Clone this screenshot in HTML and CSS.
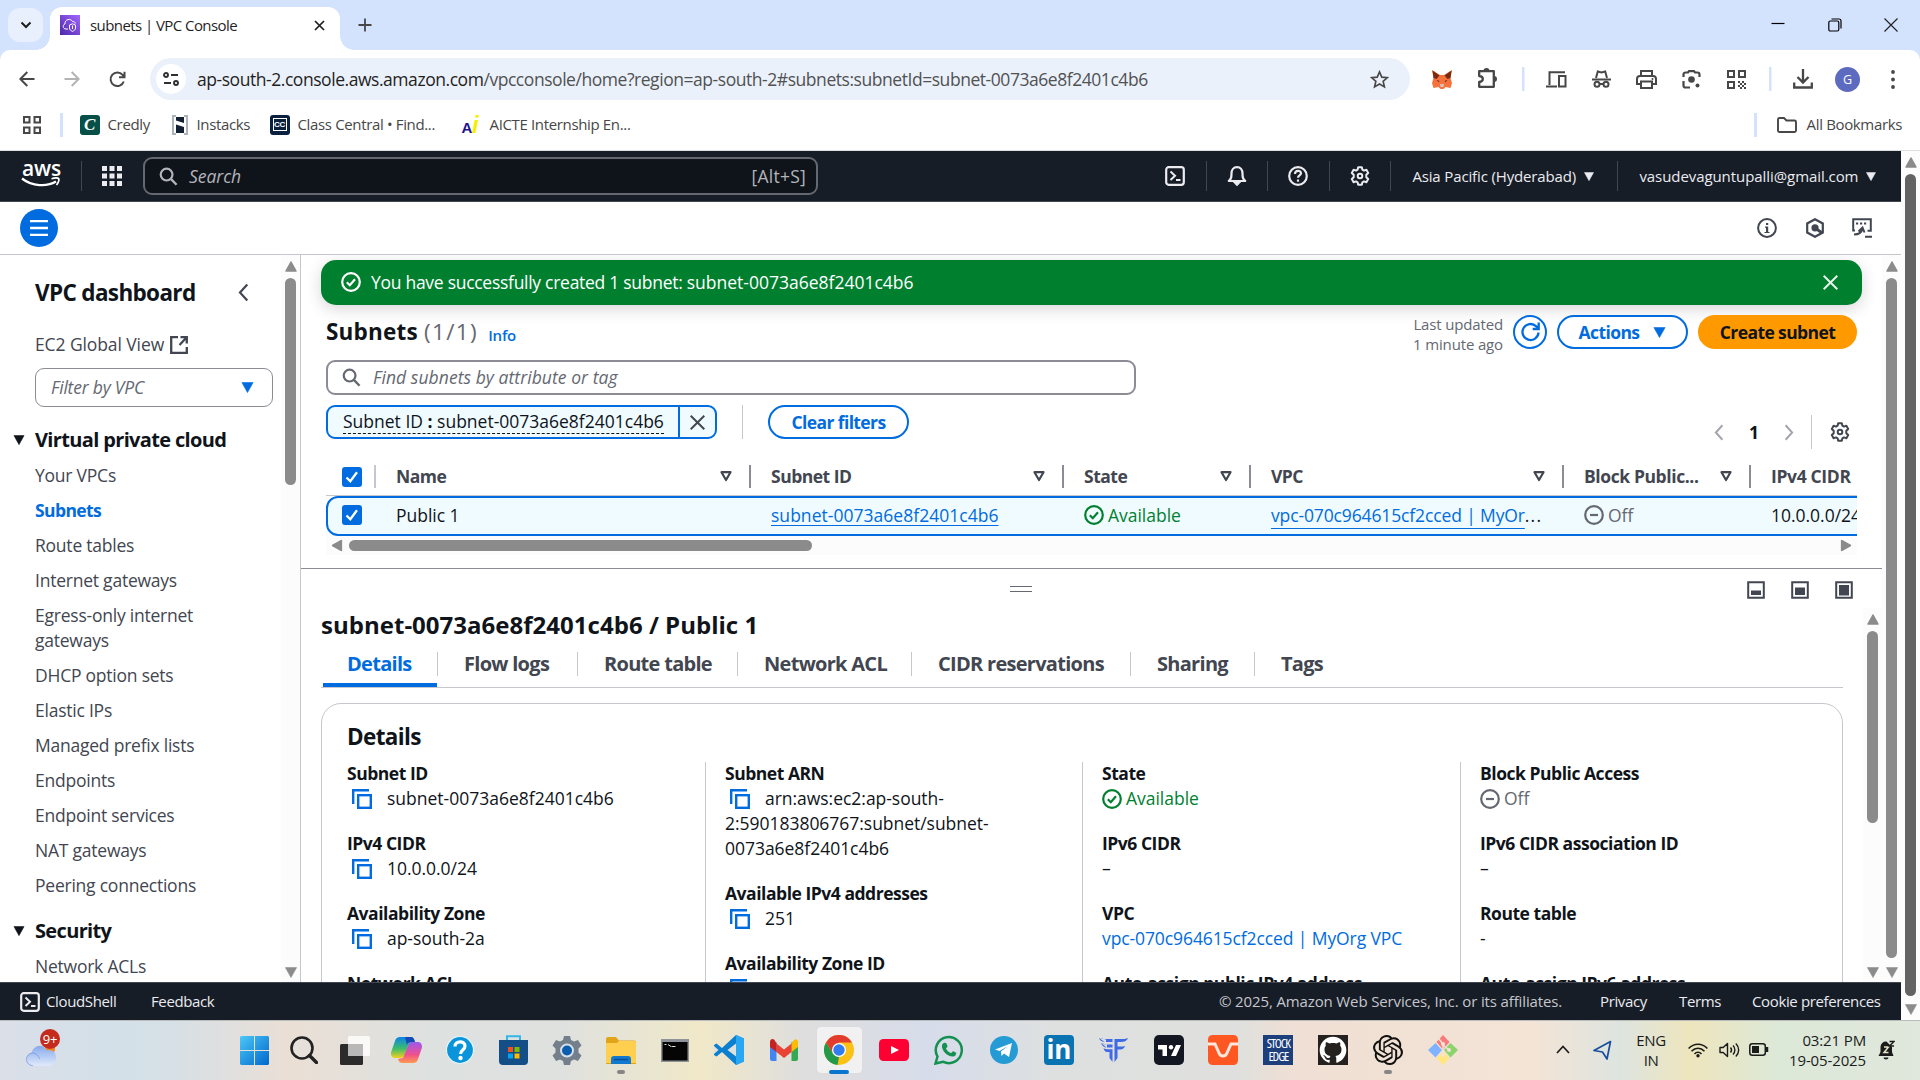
FILE: index.html
```html
<!DOCTYPE html>
<html lang="en">
<head>
<meta charset="utf-8">
<title>subnets | VPC Console</title>
<link rel="stylesheet" href="styles.css">
</head>
<body>
<svg class="defs" aria-hidden="true">
  <symbol id="i-gear" viewBox="0 0 20 20"><path d="M8.2 1.2h3.6l.6 2.5 1.5.9 2.5-.8 1.8 3.1-1.9 1.8v2.6l1.9 1.8-1.8 3.1-2.5-.8-1.5.9-.6 2.5H8.200l-.6-2.500-1.500-.9-2.500.8-1.800-3.100 1.900-1.800V8.700L1.800 6.900l1.800-3.100 2.500.8 1.500-.9z" fill="none" stroke="currentColor" stroke-width="2" stroke-linejoin="round"/><circle cx="10" cy="10" r="2.300" fill="none" stroke="currentColor" stroke-width="2"/></symbol>
  <symbol id="i-search" viewBox="0 0 20 20"><circle cx="8" cy="8" r="6.200" fill="none" stroke="currentColor" stroke-width="2.300"/><path d="M12.500 12.500 18.500 18.700" stroke="currentColor" stroke-width="2.500" fill="none"/></symbol>
  <symbol id="i-shell" viewBox="0 0 20 20"><rect x="1.200" y="1.200" width="17.600" height="17.600" rx="2.500" fill="none" stroke="currentColor" stroke-width="2.200"/><path d="M5.500 5.500 10 9.700l-4.500 4.200M11 14h4.500" fill="none" stroke="currentColor" stroke-width="2"/></symbol>
  <symbol id="i-copy" viewBox="0 0 20 20"><path d="M1.200 15V1.200H17" fill="none" stroke="currentColor" stroke-width="2.400"/><rect x="6.200" y="6.200" width="12.600" height="12.600" fill="none" stroke="currentColor" stroke-width="2.400"/></symbol>
  <symbol id="i-ok" viewBox="0 0 20 20"><circle cx="10" cy="10" r="8.800" fill="none" stroke="currentColor" stroke-width="2.200"/><path d="m5.800 10.200 3 3 5.200-6" fill="none" stroke="currentColor" stroke-width="2.200"/></symbol>
  <symbol id="i-off" viewBox="0 0 20 20"><circle cx="10" cy="10" r="8.800" fill="none" stroke="currentColor" stroke-width="2.200"/><path d="M6 10h8" stroke="currentColor" stroke-width="2.200"/></symbol>
  <symbol id="i-x" viewBox="0 0 20 20"><path d="m2 2 16 16M18 2 2 18" stroke="currentColor" stroke-width="2.300" fill="none"/></symbol>
  <symbol id="i-check" viewBox="0 0 20 20"><rect width="20" height="20" rx="3" fill="#006ce0"/><path d="m4.500 10.500 3.800 3.700L15 5.200" fill="none" stroke="#fff" stroke-width="2.300"/></symbol>
  <symbol id="i-sort" viewBox="0 0 12 11"><path d="M1.500 1.200h9L6 9z" fill="none" stroke="currentColor" stroke-width="2.200" stroke-linejoin="round"/></symbol>
  <symbol id="i-down" viewBox="0 0 12 11"><path d="M.4.600h11.200L6 10.600z" fill="currentColor" stroke="currentColor" stroke-width=".6" stroke-linejoin="round"/></symbol>
  <symbol id="i-up" viewBox="0 0 12 11"><path d="M1 10h10L6 1z" fill="currentColor" stroke="currentColor" stroke-width="1.500" stroke-linejoin="round"/></symbol>
  <symbol id="i-left" viewBox="0 0 11 20"><path d="M9.500 1.500 1.800 10l7.700 8.500" fill="none" stroke="currentColor" stroke-width="2.300"/></symbol>
</svg>

<header class="chrome">
  <div class="tabstrip">
    <button class="tab-search"><svg width="12" height="8" viewBox="0 0 12 8"><path d="m1.500 1.500 4.500 4.500 4.500-4.500" fill="none" stroke="#1f1f1f" stroke-width="2"/></svg></button>
    <div class="tab">
      <svg width="20" height="20" viewBox="0 0 20 20"><defs><linearGradient id="g-vpc" x1="0" y1="1" x2="1" y2="0"><stop offset="0" stop-color="#4d27aa"/><stop offset="1" stop-color="#a166ff"/></linearGradient></defs><rect width="20" height="20" fill="url(#g-vpc)"/><path d="M8 14H6C2.500 14 2.500 9.500 5 9c-.5-5 6-6 7.500-2.500 1.800-.3 2.700.8 2.700 2" fill="none" stroke="#fff" stroke-width="1"/><path d="M9.500 10 12.500 8.800l3 1.200v3.200c0 1.500-1.500 2.500-3 3.200-1.500-.7-3-1.700-3-3.200zM12.500 10.500v3.500" fill="none" stroke="#fff"/></svg>
      <span class="tab-title">subnets | VPC Console</span>
      <svg width="11" height="11" viewBox="0 0 11 11"><path d="m1 1 9 9M10 1l-9 9" stroke="#1f1f1f" stroke-width="1.700"/></svg>
    </div>
    <svg class="new-tab" width="14" height="14" viewBox="0 0 14 14"><path d="M7 .5v13M.5 7h13" stroke="#474747" stroke-width="1.800"/></svg>
    <div class="win-controls">
      <svg width="14" height="14" viewBox="0 0 14 14"><path d="M.5 5.500h13" stroke="#000" stroke-width="1.200"/></svg>
      <svg width="14" height="14" viewBox="0 0 14 14"><rect x=".8" y="3" width="10" height="10" rx="1.500" fill="none" stroke="#000" stroke-width="1.200"/><path d="M3.500 1h7.500a2 2 0 0 1 2 2v7.500" fill="none" stroke="#000" stroke-width="1.200"/></svg>
      <svg width="14" height="14" viewBox="0 0 14 14"><path d="m.5.500 13 13M13.500.500l-13 13" stroke="#222" stroke-width="1.200"/></svg>
    </div>
  </div>

  <div class="toolbar">
    <div class="nav-buttons">
      <svg width="16" height="16" viewBox="0 0 16 16"><path d="M15.500 8H1.500M8.300 1 1.300 8l7 7" fill="none" stroke="#474747" stroke-width="2"/></svg>
      <svg width="16" height="16" viewBox="0 0 16 16"><path d="M.5 8h14M7.700 1l7 7-7 7" fill="none" stroke="#b3b3b3" stroke-width="2"/></svg>
      <svg width="17" height="17" viewBox="0 0 17 17"><path d="M14.800 10.500a6.800 6.800 0 1 1-1.200-6.700L15.500 6M15.500.8V6.200H10" fill="none" stroke="#474747" stroke-width="2"/></svg>
    </div>
    <div class="omnibox">
      <span class="site-chip"><svg width="16" height="14" viewBox="0 0 16 14"><g fill="none" stroke="#303030" stroke-width="1.900"><circle cx="3" cy="3" r="2"/><path d="M8 3h7M1 11h7"/><circle cx="13" cy="11" r="2"/></g></svg></span>
      <span class="url">ap-south-2.console.aws.amazon.com<span>/vpcconsole/home?region=ap-south-2#subnets:subnetId=subnet-0073a6e8f2401c4b6</span></span>
      <svg width="19" height="19" viewBox="0 0 20 20"><path d="m10 2 2.400 5.500 6 .5-4.600 3.900 1.400 5.900L10 14.700l-5.200 3.100 1.400-5.900L1.600 8l6-.5z" fill="none" stroke="#474747" stroke-width="1.700"/></svg>
    </div>
    <div class="ext">
      <span class="cell"><svg width="20" height="19" viewBox="0 0 20 19"><path d="m0 0 8 5h4l8-5-1.500 8L20 13l-1.500 5-5-1-2 2h-3l-2-2-5 1L0 13l1.500-5z" fill="#f6713b"/><path d="m.5.500 7 5-3 3.500-3-1zM19.500.5l-7 5 3 3.500 3-1z" fill="#7a2a0f"/><path d="m8 14 4 0-.5 3h-3z" fill="#d8c4b8"/><path d="m4.500 10 3 1-1 1zM15.500 10l-3 1 1 1z" fill="#3b2418"/></svg></span>
      <span class="cell puzzle"><svg width="22" height="24" viewBox="0 0 22 24"><path d="M2.200 5.200h14.600v15.600H2.200V16c4.800-.5 4.800-5.500 0-6z" fill="none" stroke="#474747" stroke-width="2.300" stroke-linejoin="round"/><path d="M6.500 5a3 3 0 0 1 6 0zM17 10a3 3 0 0 1 0 6z" fill="#474747"/></svg></span>
      <span class="vbar"></span>
      <span class="cell"><svg width="21" height="17" viewBox="0 0 21 17"><path d="M3.500 14V1.200H19M0 15.500h11" fill="none" stroke="#474747" stroke-width="2"/><rect x="13" y="5" width="6.500" height="10.500" fill="none" stroke="#474747" stroke-width="2"/></svg></span>
      <span class="cell"><svg width="19" height="18" viewBox="0 0 19 18"><path d="M0 9.500h19" stroke="#474747" stroke-width="2"/><path d="m4 8 1.800-6.500 3.700 1 3.700-1L15 8" fill="none" stroke="#474747" stroke-width="2"/><g fill="none" stroke="#474747" stroke-width="2"><circle cx="5" cy="14.300" r="2.500"/><circle cx="14" cy="14.300" r="2.500"/><path d="M7.500 14h4"/></g></svg></span>
      <span class="cell"><svg width="21" height="19" viewBox="0 0 21 19"><g fill="none" stroke="#474747" stroke-width="2"><path d="M5 5V1h11v4M5 14H1V9a3 3 0 0 1 3-3h13a3 3 0 0 1 3 3v5h-4"/><path d="M5 11.500h11V18H5z"/></g><circle cx="16.500" cy="9" r="1" fill="#474747"/></svg></span>
      <span class="cell"><svg width="19" height="19" viewBox="0 0 19 19"><path d="M1.500 7V4.500a2 2 0 0 1 2-2H6l1-1.300h5l1 1.300h2.500a2 2 0 0 1 2 2V7M1.500 11v4.500a2 2 0 0 0 2 2H8" fill="none" stroke="#474747" stroke-width="2.200"/><circle cx="9.500" cy="9.500" r="3.300" fill="#474747"/><circle cx="15.500" cy="15.500" r="2" fill="#474747"/></svg></span>
      <span class="cell"><svg width="19" height="19" viewBox="0 0 19 19"><g fill="none" stroke="#474747" stroke-width="2"><rect x="1" y="1" width="6" height="6"/><rect x="12" y="1" width="6" height="6"/><rect x="1" y="12" width="6" height="6"/></g><path d="M11 11h2v2h-2zM15 11h2v2h-2zM13 13h2v2h-2zM17 13h2v2h-2zM11 15h2v2h-2zM15 15h2v2h-2zM13 17h2v2h-2zM17 17h2v2h-2z" fill="#474747"/></svg></span>
      <span class="vbar"></span>
      <span class="cell wide"><svg width="20" height="20" viewBox="0 0 20 20"><path d="M10 0v13M4.500 8 10 13.500 15.500 8M1.200 13.500v5h17.600v-5" fill="none" stroke="#474747" stroke-width="2.300"/></svg></span>
      <span class="cell"><b class="avatar">G</b></span>
      <span class="cell"><svg width="4" height="19" viewBox="0 0 4 19"><g fill="#474747"><circle cx="2" cy="2" r="1.900"/><circle cx="2" cy="9.500" r="1.900"/><circle cx="2" cy="17" r="1.900"/></g></svg></span>
    </div>
  </div>

  <div class="bookmarks">
    <svg class="apps" width="18" height="18" viewBox="0 0 18 18"><g fill="none" stroke="#474747" stroke-width="2"><path d="M1 1h5.500v5.500H1zM11.500 1H17v5.500h-5.500zM1 11.500h5.500V17H1zM11.500 11.500H17V17h-5.500z"/></g></svg>
    <span class="bm-bar"></span>
    <span class="bm credly"><span class="fav c1"><i>C</i></span>Credly</span>
    <span class="bm instacks"><svg width="16" height="20" viewBox="0 0 16 20"><path d="M4 1H1v18h3M12 1h3v18h-3" fill="none" stroke="#aeb3bb" stroke-width="2"/><path d="M4 2h8v6L4 5.500zM4 18h8v-6L4 9.500z" fill="#142033"/></svg>Instacks</span>
    <span class="bm central"><span class="fav c2"><b>CC</b></span>Class Central • Find...</span>
    <span class="bm aicte"><span class="ai"><b>A</b><i>i</i></span>AICTE Internship En...</span>
    <span class="all"><span class="bm-bar"></span><svg width="20" height="16" viewBox="0 0 20 16"><path d="M1 2.500A1.500 1.500 0 0 1 2.500 1H7l2.500 2.500h8A1.500 1.500 0 0 1 19 5v8.500a1.500 1.500 0 0 1-1.500 1.500h-15A1.500 1.500 0 0 1 1 13.500z" fill="none" stroke="#474747" stroke-width="1.900"/></svg>All Bookmarks</span>
  </div>
</header>

<div class="viewport">
  <div class="console">
    <nav class="aws-nav">
      <div class="aws-logo"><b>aws</b><svg width="39" height="11" viewBox="0 0 39 11"><path d="M1 1.500c10 8 25 8.500 34 3" fill="none" stroke="#fff" stroke-width="2.300"/><path d="M30.500 1.800c3-1 6-1.200 7-.3s0 4-2 6.500" fill="none" stroke="#fff" stroke-width="1.700"/></svg></div>
      <span class="nav-bar"></span>
      <svg class="waffle" width="20" height="20" viewBox="0 0 20 20"><path d="M0 0h5v5H0zM7.500 0h5v5h-5zM15 0h5v5h-5zM0 7.500h5v5H0zM7.500 7.500h5v5h-5zM15 7.500h5v5h-5zM0 15h5v5H0zM7.500 15h5v5h-5zM15 15h5v5h-5z" fill="#ebebf0"/></svg>
      <div class="aws-search"><svg width="19" height="19"><use href="#i-search"/></svg><i>Search</i><span>[Alt+S]</span></div>
      <div class="nav-cells">
        <span><svg width="20" height="20"><use href="#i-shell"/></svg></span>
        <span><svg width="20" height="20" viewBox="0 0 20 20"><path d="M1.800 15c2.700-2 2.700-4 2.700-7.500C4.500 4 6.500 1.200 10 1.200S15.500 4 15.500 7.500c0 3.500 0 5.500 2.700 7.500z" fill="none" stroke="currentColor" stroke-width="2.200" stroke-linejoin="round"/><path d="M6.500 16h7L10 19.800z" fill="currentColor" stroke="currentColor"/></svg></span>
        <span><svg width="20" height="20" viewBox="0 0 20 20"><circle cx="10" cy="10" r="8.800" fill="none" stroke="currentColor" stroke-width="2.200"/><path d="M7 8c0-4 6-4 6-.7 0 2-3 2.200-3 4.500" fill="none" stroke="currentColor" stroke-width="2.200"/><path d="M8.900 13.500h2.200v2.200H8.900z" fill="currentColor"/></svg></span>
        <span><svg width="20" height="20"><use href="#i-gear"/></svg></span>
      </div>
      <span class="region">Asia Pacific (Hyderabad)<svg width="10" height="9"><use href="#i-down"/></svg></span>
      <span class="account">vasudevaguntupalli@gmail.com<svg width="10" height="9"><use href="#i-down"/></svg></span>
    </nav>

    <div class="subbar">
      <button class="burger"><svg width="18" height="16" viewBox="0 0 18 16"><path d="M0 1.200h18M0 8h18M0 14.800h18" stroke="#fff" stroke-width="2.300"/></svg></button>
      <div class="tools">
        <svg width="20" height="20" viewBox="0 0 20 20"><circle cx="10" cy="10" r="8.900" fill="none" stroke="currentColor" stroke-width="2"/><path d="M9 5h2.200v2.100H9zM8 8.500h3.200v5.500h1.300v1H7.500v-1H9V9.700H8z" fill="currentColor"/></svg>
        <svg width="20" height="20" viewBox="0 0 20 20"><path d="m10 1.200 7.800 4.300v9L10 18.800l-7.800-4.300v-9z" fill="none" stroke="currentColor" stroke-width="2.200"/><circle cx="10" cy="9.800" r="3.600" fill="currentColor"/><path d="m10 10 6.500 4.500" stroke="currentColor" stroke-width="2.800"/></svg>
        <svg width="20" height="20" viewBox="0 0 20 20"><path d="M3 12.500H1.200V1.200h17.600v11.500H15.500M2 16.500c4.500 0 7.500-1 8.500-6M6.500 13.500l4-4 2 5M13 18.800h7" fill="none" stroke="currentColor" stroke-width="2"/><path d="M4 4.500h2.200v2H4zM8 4.500h2.200v2H8zM12 4.500h2.200v2H12z" fill="currentColor"/></svg>
      </div>
    </div>

    <div class="work">
      <aside class="sidebar">
        <div class="side-title"><h2>VPC dashboard</h2><svg width="11" height="19"><use href="#i-left"/></svg></div>
        <p class="ec2">EC2 Global View <svg width="18" height="18" viewBox="0 0 18 18"><path d="M8 1.200H1.200v15.600h15.600V11M10.500 1.200h6.300v6.300M16.500 1.500l-7 7.500" fill="none" stroke="currentColor" stroke-width="2.300"/></svg></p>
        <div class="vpc-filter"><i>Filter by VPC</i><svg width="13" height="11"><use href="#i-down"/></svg></div>
        <h3><svg width="12" height="10"><use href="#i-down"/></svg>Virtual private cloud</h3>
        <ul>
          <li>Your VPCs</li><li class="on">Subnets</li><li>Route tables</li><li>Internet gateways</li><li>Egress-only internet<br>gateways</li><li>DHCP option sets</li><li>Elastic IPs</li><li>Managed prefix lists</li><li>Endpoints</li><li>Endpoint services</li><li>NAT gateways</li><li>Peering connections</li>
        </ul>
        <h3><svg width="12" height="10"><use href="#i-down"/></svg>Security</h3>
        <ul><li>Network ACLs</li></ul>
      </aside>
      <div class="scroll side-scroll"><svg width="12" height="11"><use href="#i-up"/></svg><span class="thumb"></span><svg width="12" height="11"><use href="#i-down"/></svg></div>

      <main>
        <section class="list">
          <div class="flash"><svg width="20" height="20"><use href="#i-ok"/></svg><span>You have successfully created 1 subnet: <em>subnet-0073a6e8f2401c4b6</em></span><svg class="x" width="17" height="17"><use href="#i-x"/></svg></div>
          <div class="list-head">
            <h1>Subnets <span>(1/1)</span></h1><a>Info</a>
            <p>Last updated<br>1 minute ago</p>
            <button class="btn refresh"><svg width="21" height="20" viewBox="0 0 21 20"><path d="M18.500 10.500a8 8 0 1 1-2.500-6.300L18.700 6.500M18.700.5v6.500h-6" fill="none" stroke="currentColor" stroke-width="2.300"/></svg></button>
            <button class="btn actions">Actions<svg width="13" height="11"><use href="#i-down"/></svg></button>
            <button class="btn create">Create subnet</button>
          </div>
          <div class="find"><svg width="19" height="19"><use href="#i-search"/></svg><i>Find subnets by attribute or tag</i></div>
          <div class="filters">
            <div class="token"><span><u>Subnet ID <b>:</b> subnet-0073a6e8f2401c4b6</u></span><svg width="17" height="17"><use href="#i-x"/></svg></div>
            <span class="f-bar"></span>
            <button class="btn clear">Clear filters</button>
            <div class="pager"><svg width="10" height="17"><use href="#i-left"/></svg><b>1</b><svg class="flip" width="10" height="17"><use href="#i-left"/></svg><span></span><svg class="gear" width="20" height="20"><use href="#i-gear"/></svg></div>
          </div>
          <div class="table">
            <div class="tr th">
              <span class="sel"><svg width="20" height="20"><use href="#i-check"/></svg></span>
              <span>Name<svg width="12" height="11"><use href="#i-sort"/></svg></span>
              <span>Subnet ID<svg width="12" height="11"><use href="#i-sort"/></svg></span>
              <span>State<svg width="12" height="11"><use href="#i-sort"/></svg></span>
              <span>VPC<svg width="12" height="11"><use href="#i-sort"/></svg></span>
              <span class="blk">Block Public...<svg width="12" height="11"><use href="#i-sort"/></svg></span>
              <span class="last">IPv4 CIDR</span>
            </div>
            <div class="tr td">
              <span class="sel"><svg width="20" height="20"><use href="#i-check"/></svg></span>
              <span>Public 1</span>
              <span><a>subnet-0073a6e8f2401c4b6</a></span>
              <span class="ok"><svg width="20" height="20"><use href="#i-ok"/></svg>Available</span>
              <span class="cut"><a class="low">vpc-070c964615cf2cced | MyOr</a>...</span>
              <span class="off"><svg width="20" height="20"><use href="#i-off"/></svg>Off</span>
              <span>10.0.0.0/24</span>
            </div>
          </div>
          <div class="hscroll"><svg class="l" width="12" height="11"><use href="#i-up"/></svg><span></span><svg class="r" width="12" height="11"><use href="#i-up"/></svg></div>
        </section>

        <section class="split">
          <div class="split-bar">
            <div class="handle"><span></span></div>
            <svg width="18" height="18" viewBox="0 0 18 18"><path d="M1.200 1.200h15.600v15.600H1.200z" fill="none" stroke="currentColor" stroke-width="2"/><path d="M4 9.500h10V14H4z" fill="currentColor"/></svg>
            <svg width="18" height="18" viewBox="0 0 18 18"><path d="M1.200 1.200h15.600v15.600H1.200z" fill="none" stroke="currentColor" stroke-width="2"/><path d="M4 6.500h10V14H4z" fill="currentColor"/></svg>
            <svg width="18" height="18" viewBox="0 0 18 18"><path d="M1.200 1.200h15.600v15.600H1.200z" fill="none" stroke="currentColor" stroke-width="2"/><path d="M4 4h10v10.500H4z" fill="currentColor"/></svg>
          </div>
          <div class="split-body">
            <div class="split-content">
              <h2>subnet-0073a6e8f2401c4b6 / Public 1</h2>
              <div class="tabs"><span class="on t1">Details</span><span class="t2">Flow logs</span><span class="t3">Route table</span><span class="t4">Network ACL</span><span class="t5">CIDR reservations</span><span class="t6">Sharing</span><span class="t7">Tags</span></div>
              <div class="card">
                <h2>Details</h2>
                <div class="cols">
                  <div>
                    <dl><dt>Subnet ID</dt><dd><svg class="cp" width="20" height="20"><use href="#i-copy"/></svg><em>subnet-0073a6e8f2401c4b6</em></dd></dl>
                    <dl><dt>IPv4 CIDR</dt><dd><svg class="cp" width="20" height="20"><use href="#i-copy"/></svg>10.0.0.0/24</dd></dl>
                    <dl><dt>Availability Zone</dt><dd><svg class="cp" width="20" height="20"><use href="#i-copy"/></svg>ap-south-2a</dd></dl>
                    <dl><dt>Network ACL</dt></dl>
                  </div>
                  <div>
                    <dl><dt>Subnet ARN</dt><dd><svg class="cp" width="20" height="20"><use href="#i-copy"/></svg>arn:aws:ec2:ap-south-<br>2:590183806767:subnet/subnet-<br>0073a6e8f2401c4b6</dd></dl>
                    <dl><dt>Available IPv4 addresses</dt><dd><svg class="cp" width="20" height="20"><use href="#i-copy"/></svg>251</dd></dl>
                    <dl><dt>Availability Zone ID</dt><dd><svg class="cp" width="20" height="20"><use href="#i-copy"/></svg></dd></dl>
                  </div>
                  <div>
                    <dl><dt>State</dt><dd class="ok"><svg width="20" height="20"><use href="#i-ok"/></svg>Available</dd></dl>
                    <dl><dt>IPv6 CIDR</dt><dd>–</dd></dl>
                    <dl><dt>VPC</dt><dd><a>vpc-070c964615cf2cced | MyOrg VPC</a></dd></dl>
                    <dl><dt>Auto-assign public IPv4 address</dt></dl>
                  </div>
                  <div>
                    <dl><dt>Block Public Access</dt><dd class="off"><svg width="20" height="20"><use href="#i-off"/></svg>Off</dd></dl>
                    <dl><dt>IPv6 CIDR association ID</dt><dd>–</dd></dl>
                    <dl><dt>Route table</dt><dd>-</dd></dl>
                    <dl><dt>Auto-assign IPv6 address</dt></dl>
                  </div>
                </div>
              </div>
            </div>
            <div class="scroll split-scroll"><svg width="12" height="11"><use href="#i-up"/></svg><span class="thumb"></span><svg width="12" height="11"><use href="#i-down"/></svg></div>
          </div>
        </section>
      </main>
      <div class="scroll main-scroll"><svg width="12" height="11"><use href="#i-up"/></svg><span class="thumb"></span><svg width="12" height="11"><use href="#i-down"/></svg></div>
    </div>

    <footer>
      <svg width="20" height="20"><use href="#i-shell"/></svg><span class="f1">CloudShell</span><span class="f2">Feedback</span>
      <span class="copy">© 2025, Amazon Web Services, Inc. or its affiliates.</span><span class="f3">Privacy</span><span class="f4">Terms</span><span class="f5">Cookie preferences</span>
    </footer>
  </div>
  <div class="scroll page-scroll"><svg width="12" height="11"><use href="#i-up"/></svg><span class="thumb"></span><svg width="12" height="11"><use href="#i-down"/></svg></div>
</div>

<div class="taskbar">
  <div class="weather"><svg width="31" height="25" viewBox="0 0 32 25"><defs><linearGradient id="g-cl" x1="0" y1="0" x2="0" y2="1"><stop offset="0" stop-color="#86a9ec"/><stop offset="1" stop-color="#dfe9fb"/></linearGradient></defs><circle cx="25" cy="7" r="5" fill="#f08a24"/><path d="M7 24a7 7 0 0 1-1-13.500C7 4 17 0 21 8c8-1 10 4 10 8s-3 8-7 8z" fill="url(#g-cl)"/><path d="M7 24a6 6 0 0 1 0-13c4 0 6 3 7 6" fill="none" stroke="#6f97de" stroke-width=".8"/></svg><span class="badge">9+</span></div>
  <div class="apps-row">
    <span class="w50"><svg width="29" height="29" viewBox="0 0 29 29"><defs><linearGradient id="g-win" x1="0" y1="0" x2="1" y2="1"><stop offset="0" stop-color="#4cc8f8"/><stop offset="1" stop-color="#0067cc"/></linearGradient></defs><path d="M1 0h13v14H0V1zM15 0h13l1 1v13H15zM0 15h14v14H1l-1-1zM15 15h14v13l-1 1H15z" fill="url(#g-win)"/></svg></span>
    <span class="w50"><svg width="28" height="28" viewBox="0 0 28 28"><circle cx="12" cy="12" r="10.500" fill="#e6e2dd" fill-opacity=".5" stroke="#222" stroke-width="2.600"/><path d="m19.500 19.500 7 7" stroke="#222" stroke-width="3.400" stroke-linecap="round"/></svg></span>
    <span class="w51"><svg width="30" height="29" viewBox="0 0 30 29"><rect x="0" y="8" width="23" height="21" rx="1.500" fill="#2b2b2b"/><rect x="8" y="0" width="22" height="20" rx="1.500" fill="#fff" fill-opacity=".8"/><rect x="8" y="8" width="15" height="12" fill="#b8b8b8"/></svg></span>
    <span class="w53"><svg width="31" height="28" viewBox="0 0 31 28"><defs><linearGradient id="g-c1" x1="0" y1="0" x2="0" y2="1"><stop offset="0" stop-color="#0a84e8"/><stop offset=".55" stop-color="#3bbd6c"/><stop offset="1" stop-color="#f5cf1c"/></linearGradient><linearGradient id="g-c2" x1="0" y1="0" x2="0" y2="1"><stop offset="0" stop-color="#9b59f0"/><stop offset=".6" stop-color="#f0508c"/><stop offset="1" stop-color="#ff9a4d"/></linearGradient></defs><path d="M14 1h6c2 0 3 1.500 4 5l-6 2-4 10c-1 3-2 4-5 4H4c-3 0-5-3-3.500-7L4 5c1-3 2.500-4 5-4z" fill="url(#g-c1)"/><path d="M17 27h-6c-2 0-3-1.500-4-4l5-1 5-12c1-3 2-4 5-4h5c3 0 5 3 3.500 7L27 23c-1 3-2.500 4-5 4z" fill="url(#g-c2)"/><path d="M14 1h6c2 0 3 1.500 4 5h-3c-3 0-4 0-5 3z" fill="#1648b8"/></svg></span>
    <span class="w53"><svg width="28" height="30" viewBox="0 0 28 30"><circle cx="14" cy="15" r="13.500" fill="#0a95db" stroke="#e8f6fd" stroke-width="1.200"/><path d="M9 11.500c0-6 10-6 10-.5 0 4-4.500 4-4.500 8" fill="none" stroke="#fff" stroke-width="3.200"/><circle cx="14.500" cy="23" r="2.200" fill="#fff"/></svg></span>
    <span><svg width="29" height="30" viewBox="0 0 29 30"><path d="M8 7V1.200h13V7" fill="none" stroke="#35b6e8" stroke-width="2"/><path d="M0 5h29v21a4 4 0 0 1-4 4H4a4 4 0 0 1-4-4z" fill="#134e86"/><path d="M9 12h5v5H9z" fill="#f25022"/><path d="M15.500 12h5v5h-5z" fill="#7fba00"/><path d="M9 18.500h5v5H9z" fill="#00a4ef"/><path d="M15.500 18.500h5v5h-5z" fill="#ffb900"/></svg></span>
    <span><svg width="30" height="29" viewBox="0 0 30 29"><path d="M12 0h6l1 4 3 1.500 4-1.500 3.500 5.500-3 3v4l3 3-3.500 5.500-4-1.500-3 1.500-1 4h-6l-1-4-3-1.500L4 25 .5 19.500l3-3v-4l-3-3L4 4l4 1.500L11 4z" fill="#73808c"/><circle cx="15" cy="14.500" r="6" fill="#0d5dae" stroke="#d5e0ea" stroke-width="2"/></svg></span>
    <span class="run"><svg width="30" height="27" viewBox="0 0 30 27"><path d="M0 2a2 2 0 0 1 2-2h8l3 3.500H28a2 2 0 0 1 2 2V27H0z" fill="#e2a51a"/><path d="M0 6h11l2-2h15a2 2 0 0 1 2 2v20H0z" fill="#ffd04f"/><path d="M5 27v-5a3 3 0 0 1 3-3h14a3 3 0 0 1 3 3v5z" fill="#1279cf"/><path d="M8 22.500h14" stroke="#0a4f96" stroke-width="1.500"/></svg></span>
    <span><svg width="28" height="23" viewBox="0 0 28 23"><rect width="28" height="23" fill="#8e9399"/><rect x="1.500" y="3" width="25" height="18.500" fill="#050505"/><path d="M3.500 5.500h2M7 5.500l3 2M10.500 7.500h4" stroke="#ddd"/></svg></span>
    <span class="w55"><svg width="30" height="30" viewBox="0 0 30 30"><path d="m22 0 8 3.500v23L22 30 8 17l-5.500 4.500L0 20V10l2.500-1.500L8 13z" fill="#0b7fd0"/><path d="m22 0 8 3.500v23L22 30z" fill="#2aa7f2"/><path d="M22 8.500v13L13.500 15z" fill="#dfe1dc"/><path d="M0 11v8l4.500-4z" fill="#dfe1dc"/></svg></span>
    <span class="w55"><svg width="28" height="22" viewBox="0 0 28 22"><path d="M0 3h6.500v19H2a2 2 0 0 1-2-2z" fill="#4285f4"/><path d="M21.500 3H28v17a2 2 0 0 1-2 2h-4.500z" fill="#34a853"/><path d="M21.500 4.500 24 1c2-2 4 0 4 2v5l-6.500 5z" fill="#fbbc04"/><path d="M6.500 4.500 14 10.500l7.500-6V13L14 19 6.500 13z" fill="#ea4335"/><path d="M0 3c0-2.500 2.500-4 4.500-2l2 3.500V13L0 8z" fill="#c5221f"/></svg></span>
    <span class="w55 active"><svg width="30" height="30" viewBox="0 0 30 30"><circle cx="15" cy="15" r="15" fill="#fbc116"/><path d="M2 7.500A15 15 0 0 1 28 7.500H15L9 18.500z" fill="#e33b2e"/><path d="M2 7.500 9 18.500 15 22l-1.500 8A15 15 0 0 1 2 7.500z" fill="#229a4a"/><circle cx="15" cy="15" r="7" fill="#fff"/><circle cx="15" cy="15" r="5.700" fill="#2f7df0"/></svg></span>
    <span class="w55"><svg width="30" height="22" viewBox="0 0 30 22"><rect width="30" height="22" rx="4.500" fill="#ff0033"/><path d="m12 7 8 4-8 4z" fill="#fff"/></svg></span>
    <span class="w55"><svg width="30" height="30" viewBox="0 0 30 30"><path d="m1.500 28.500 2-7A13 13 0 1 1 9 26.700z" fill="none" stroke="#149150" stroke-width="2.500"/><path d="M10 8c2-1 2.500 0 3.500 3 .3 1-1.500 2-1.500 2.500 1 2 2.500 3.500 5 4.500.8 0 1.500-2 2.200-1.800 3.500 1.500 3.500 1.800 2.500 3.800C18 25 7 17 8 10.500 8.300 9 9 8.400 10 8z" fill="#149150"/></svg></span>
    <span class="w55"><svg width="28" height="28" viewBox="0 0 28 28"><circle cx="14" cy="14" r="14" fill="#249bd4"/><path d="M5 13.500 22 7l-3 14-5-3.500-2.500 2.500-.5-4.500 7-5.500-8.500 5z" fill="#fff"/></svg></span>
    <span class="w55"><b class="sq in">in</b></span>
    <span class="w55"><svg width="29" height="24" viewBox="0 0 29 24"><path d="M0 0c3 1.500 8 1 13.500 1v3H7C6 4 5.500 4 5 3.500M2 5c3 2 6 1.500 11.500 1.500v3H7.500M4.500 10c2 1.500 5 1.200 9 1.200V24l-3-4v-6H8c-2 0-3-2-3.500-4zM2 5c.7 2.500 3 4.500 6 4.500V6.800zM0 0c.7 2.500 3 4 7 4V1.500z" fill="#4169e8"/><path d="M29 0c-3 1.500-8 1-13.500 1v23l3-4V11.500h3c2 0 4-1.500 4.500-3.500-2 .7-4 .5-7.500.5V4H22c4 0 6-1.500 7-4z" fill="#3c6be4"/></svg></span>
    <span class="w55"><svg width="30" height="30" viewBox="0 0 30 30"><rect width="30" height="30" rx="5" fill="#131722"/><path d="M4 10h9v11H8.500v-6.500H4zM22 10h5l-5 11h-5z" fill="#fff"/><circle cx="17" cy="12.200" r="2.200" fill="#fff"/></svg></span>
    <span class="w55"><svg width="30" height="30" viewBox="0 0 30 30"><rect width="30" height="30" rx="4.500" fill="#ff5722"/><path d="M0 9h7l4 9c1.500 4 6.500 4 8 0l4-9h7" fill="none" stroke="#ffe7db" stroke-width="3"/></svg></span>
    <span class="w55"><b class="sq edge">STOCK<br>EDGE</b></span>
    <span class="w55"><svg width="30" height="30" viewBox="-1.500 -1.200 27 27"><rect x="-1.500" y="-1.200" width="27" height="27" fill="#24211f"/><path d="M12 .297c-6.630 0-12 5.373-12 12 0 5.303 3.438 9.800 8.205 11.385.6.113.82-.258.82-.577 0-.285-.01-1.040-.015-2.040-3.338.724-4.042-1.610-4.042-1.610C4.422 18.070 3.633 17.700 3.633 17.700c-1.087-.744.084-.729.084-.729 1.205.084 1.838 1.236 1.838 1.236 1.070 1.835 2.809 1.305 3.495.998.108-.776.417-1.305.760-1.605-2.665-.3-5.466-1.332-5.466-5.930 0-1.310.465-2.380 1.235-3.220-.135-.303-.54-1.523.105-3.176 0 0 1.005-.322 3.300 1.230.96-.267 1.980-.399 3-.405 1.020.006 2.040.138 3 .405 2.280-1.552 3.285-1.230 3.285-1.230.645 1.653.24 2.873.12 3.176.765.840 1.230 1.910 1.230 3.220 0 4.610-2.805 5.625-5.475 5.920.42.360.81 1.096.81 2.220 0 1.606-.015 2.896-.015 3.286 0 .315.21.690.825.570C20.565 22.092 24 17.592 24 12.297c0-6.627-5.373-12-12-12" fill="#fff"/></svg></span>
    <span class="w55 run"><svg width="30" height="30" viewBox="0 0 24 24"><path fill="#111" d="M22.2819 9.8211a5.9847 5.9847 0 0 0-.5157-4.9108 6.0462 6.0462 0 0 0-6.5098-2.9A6.0651 6.0651 0 0 0 4.9807 4.1818a5.9847 5.9847 0 0 0-3.9977 2.9 6.0462 6.0462 0 0 0 .7427 7.0966 5.98 5.98 0 0 0 .511 4.9107 6.051 6.051 0 0 0 6.5146 2.9001A5.9847 5.9847 0 0 0 13.2599 24a6.0557 6.0557 0 0 0 5.7718-4.2058 5.9894 5.9894 0 0 0 3.9977-2.9001 6.0557 6.0557 0 0 0-.7475-7.0729zm-9.022 12.6081a4.4755 4.4755 0 0 1-2.8764-1.0408l.1419-.0804 4.7783-2.7582a.7948.7948 0 0 0 .3927-.6813v-6.7369l2.02 1.1686a.071.071 0 0 1 .038.052v5.5826a4.504 4.504 0 0 1-4.4945 4.4944zm-9.6607-4.1254a4.4708 4.4708 0 0 1-.5346-3.0137l.142.0852 4.783 2.7582a.7712.7712 0 0 0 .7806 0l5.8428-3.3685v2.3324a.0804.0804 0 0 1-.0332.0615L9.74 19.9502a4.4992 4.4992 0 0 1-6.1408-1.6464zM2.3408 7.8956a4.485 4.485 0 0 1 2.3655-1.9728V11.6a.7664.7664 0 0 0 .3879.6765l5.8144 3.3543-2.0201 1.1685a.0757.0757 0 0 1-.071 0l-4.8303-2.7865A4.504 4.504 0 0 1 2.3408 7.872zm16.5963 3.8558L13.1038 8.364 15.1192 7.2a.0757.0757 0 0 1 .071 0l4.8303 2.7913a4.4944 4.4944 0 0 1-.6765 8.1042v-5.6772a.79.79 0 0 0-.407-.667zm2.0107-3.0231l-.142-.0852-4.7735-2.7818a.7759.7759 0 0 0-.7854 0L9.409 9.2297V6.8974a.0662.0662 0 0 1 .0284-.0615l4.8303-2.7866a4.4992 4.4992 0 0 1 6.6802 4.66zM8.3065 12.863l-2.02-1.1638a.0804.0804 0 0 1-.038-.0567V6.0742a4.4992 4.4992 0 0 1 7.3757-3.4537l-.142.0805L8.704 5.459a.7948.7948 0 0 0-.3927.6813zm1.0976-2.3654l2.602-1.4998 2.6069 1.4998v2.9994l-2.5974 1.4997-2.6067-1.4997Z"/></svg></span>
    <span class="w55"><svg width="30" height="30" viewBox="0 0 30 30"><path d="m15 0 6.500 7-6.500 7.500L8.500 7z" fill="#f77b7b"/><path d="m7.500 8 6.500 7-6.500 7.500L0 15z" fill="#80b3ff"/><path d="m22.500 8 7.500 7-7.500 7.500L16 15z" fill="#8ad46b"/><path d="m15 16 6.500 7-6.500 7-6.500-7z" fill="#ffe680"/><path d="m11 4 4 5v11M15 10l6 5" fill="none" stroke="#f4e3d6" stroke-width="1.500"/><g fill="#f4e3d6"><circle cx="15" cy="9" r="2"/><circle cx="21" cy="15" r="2"/><circle cx="15" cy="20" r="2"/></g></svg></span>
  </div>
  <div class="tray">
    <span class="c-chev"><svg width="14" height="9" viewBox="0 0 14 9"><path d="m1 8 6-6.500L13 8" fill="none" stroke="#1b1b1b" stroke-width="1.700"/></svg></span>
    <span class="c-send"><svg width="19" height="20" viewBox="0 0 19 20"><path d="M17.500 1.500 1 10.500l8.500 1.500 4.500 7z" fill="none" stroke="#174f9c" stroke-width="1.700" stroke-linejoin="round"/></svg></span>
    <span class="c-lang">ENG<br>IN</span>
    <span class="c-wifi"><svg width="20" height="16" viewBox="0 0 20 16"><g fill="none" stroke="#1b1b1b" stroke-width="1.500"><path d="M.6 6.500c5.300-5.700 13.500-5.700 18.800 0M3.500 9.300c3.800-4 9.200-4 13 0M6.500 12c2-2.300 5-2.300 7 0"/></g><circle cx="10" cy="13.800" r="1.700" fill="#1b1b1b"/></svg></span>
    <span class="c-spk"><svg width="21" height="16" viewBox="0 0 21 16"><path d="M1 5.500h3.200L8.500 1.500v13L4.200 10.500H1z" fill="none" stroke="#1b1b1b" stroke-width="1.400" stroke-linejoin="round"/><path d="M11.500 5.500c1.300 1.500 1.300 3.500 0 5M14 3.500c2.500 2.500 2.500 6.500 0 9M16.800 1.500c3.800 3.700 3.800 9.300 0 13" fill="none" stroke="#1b1b1b" stroke-width="1.400"/></svg></span>
    <span class="c-bat"><svg width="20" height="13" viewBox="0 0 20 13"><rect x=".8" y=".8" width="15.500" height="11.400" rx="2.500" fill="none" stroke="#1b1b1b" stroke-width="1.500"/><rect x="3" y="3" width="7" height="7" fill="#1b1b1b"/><path d="M18 4v5" stroke="#1b1b1b" stroke-width="2.500"/></svg></span>
    <span class="c-time">03:21 PM<br>19-05-2025</span>
    <span class="c-bell"><svg width="17" height="20" viewBox="0 0 17 20"><path d="M2.500 7a5.500 5.500 0 0 1 6-5.500L14 7v5l1.500 4H.5L2.500 12z" fill="#1b1b1b"/><path d="M5.500 17.500h5a2.500 2 0 0 1-5 0z" fill="#1b1b1b"/><path d="M6 7h4.500L6 12.500h4.500" fill="none" stroke="#e6e6c8" stroke-width="1.500"/><path d="M11.500 1.500H16L11.500 6H16" fill="none" stroke="#1b1b1b" stroke-width="1.400"/></svg></span>
  </div>
</div>
</body>
</html>
```
FILE: styles.css
```css
* { box-sizing: border-box; }
body { margin: 0; width: 1920px; height: 1080px; overflow: hidden; display: flex; flex-direction: column; font: 17.5px/25px "Open Sans", "Noto Sans", sans-serif; letter-spacing: -.2px; color: #0f141a; background: #fff; }
h1, h2, h3, p, ul, dl, dd { margin: 0; padding: 0; }
ul { list-style: none; }
button { border: 0; padding: 0; font: inherit; letter-spacing: inherit; }
svg { display: block; flex: none; }
em { font-style: normal; letter-spacing: 0; }
.defs { position: absolute; width: 0; height: 0; }

/* Browser frame */
.chrome { height: 151px; border-bottom: 1px solid #dcdfdf; background: #d3e3fd; color: #474747; font-size: 15px; }
.tabstrip { height: 50px; display: flex; align-items: flex-start; padding-left: 8px; }
.tab-search { width: 35px; height: 34px; margin-top: 8px; border-radius: 12px; background: #e9f0fd; display: flex; align-items: center; justify-content: center; }
.tab { position: relative; width: 290px; height: 43px; margin: 7px 0 0 7px; padding: 0 15px 7px 10px; background: #fff; border-radius: 12px 12px 0 0; display: flex; align-items: center; gap: 10px; }
.tab::before, .tab::after { content: ""; position: absolute; bottom: 0; width: 14px; height: 14px; }
.tab::before { right: 100%; background: radial-gradient(circle at 0 0, transparent 13.5px, #fff 14px); }
.tab::after { left: 100%; background: radial-gradient(circle at 100% 0, transparent 13.5px, #fff 14px); }
.tab-title { flex: 1; color: #1f1f1f; letter-spacing: -.57px; }
.new-tab { margin: 18px 0 0 18px; }
.win-controls { margin: 18px 22px 0 auto; display: flex; gap: 42.5px; }
.toolbar { height: 58px; display: flex; align-items: center; background: #fff; border-radius: 10px 10px 0 0; }
.nav-buttons { width: 150px; padding-left: 19px; display: flex; gap: 29px; }
.omnibox { width: 1260px; height: 42px; border-radius: 21px; background: #ebf1fa; display: flex; align-items: center; padding: 0 21px 0 6px; }
.site-chip { width: 30px; height: 30px; border-radius: 50%; background: #fff; display: flex; align-items: center; justify-content: center; }
.url { flex: 1; margin-left: 11px; font-size: 17.5px; letter-spacing: -.45px; color: #1f1f1f; }
.url span { color: #505254; }
.ext { display: flex; align-items: center; padding-left: 9px; }
.cell { width: 45px; display: flex; justify-content: center; }
.cell.puzzle { width: 48px; padding-bottom: 2px; }
.cell.wide { width: 44px; }
.vbar { width: 22px; height: 24px; background: linear-gradient(#d3e3fd, #d3e3fd) center/2.5px 100% no-repeat; }
.avatar { width: 25px; height: 25px; border-radius: 50%; background: #5c6bc0; color: #fff; font-size: 12.5px; font-weight: 400; text-align: center; }
.bookmarks { height: 42px; padding: 0 18px 9px 23px; background: #fff; display: flex; align-items: center; letter-spacing: -.35px; }
.bm-bar { width: 2.5px; height: 24px; background: #d3e3fd; }
.apps + .bm-bar { margin-left: 19px; }
.bm { display: flex; align-items: center; gap: 8px; }
.credly { margin-left: 17px; width: 92px; }
.instacks { width: 98px; gap: 9px; }
.central { width: 192px; }
.fav { width: 20px; height: 20px; border-radius: 3px; display: flex; align-items: center; justify-content: center; color: #fff; }
.c1 { background: #075047; font: 700 17px/18px "Liberation Serif", serif; }
.c2 { background: #0b1f3f; }
.c2 b { width: 14px; height: 13px; border: 1px solid #fff; font: 700 8px/11px "Liberation Sans", sans-serif; text-align: center; }
.ai { width: 20px; font: 700 15px/20px "Liberation Sans", sans-serif; color: #1d128c; padding-top: 4px; display: flex; align-items: baseline; }
.ai i { color: #f6f000; font-size: 24px; }
.all { margin-left: auto; display: flex; align-items: center; gap: 10px; }
.all svg { margin-left: 10px; }

/* Scrollbars */
.viewport { height: 869px; display: flex; }
.scroll { width: 19px; background: #fcfcfc; color: #8b8b8b; display: flex; flex-direction: column; align-items: center; padding: 6px 0 4px; }
.scroll .thumb { width: 11px; border-radius: 6px; background: #8b8b8b; margin: 6px 0 auto; }
.side-scroll .thumb { height: 207px; }
.side-scroll { border-right: 1px solid #c6c6cd; width: 20px; }
.main-scroll .thumb { height: 680px; }
.split-scroll .thumb { height: 192px; }
.page-scroll .thumb { height: 822px; background: #636363; }
.page-scroll { padding-bottom: 5px; }

/* AWS navigation */
.console { width: 1901px; display: flex; flex-direction: column; }
.aws-nav { height: 51px; background: #161d26; border-bottom: 1px solid #424650; display: flex; align-items: center; color: #ebebf0; font-size: 15px; font-weight: 500; }
.aws-logo { width: 60px; padding: 0 0 0 21px; }
.aws-logo b { display: block; font: 600 21px/18px "Open Sans", sans-serif; letter-spacing: -.1px; color: #fff; padding-left: 1px; height: 15px; margin-top: -5px; }
.aws-logo svg { margin-top: 3px; }
.nav-bar { width: 1px; height: 30px; background: #424650; margin-left: 21px; }
.waffle { margin: 0 21px 0 20px; }
.aws-search { width: 675px; height: 38px; border: 2px solid #656871; border-radius: 9px; background: #0f141a; display: flex; align-items: center; padding: 0 10px 0 14px; font-size: 17.5px; font-weight: 400; color: #b4b4bb; letter-spacing: -.05px; }
.aws-search i { margin-left: 11px; flex: 1; }
.aws-search span { letter-spacing: .25px; }
.nav-cells { display: flex; margin-left: 327px; }
.nav-cells span { width: 61.6px; height: 30px; border-right: 1px solid #424650; display: flex; align-items: center; justify-content: center; }
.region { width: 227px; height: 30px; padding-left: 21px; border-right: 1px solid #424650; display: flex; align-items: center; gap: 8px; letter-spacing: -.14px; }
.account { padding-left: 21px; display: flex; align-items: center; gap: 8px; letter-spacing: -.07px; }
.subbar { height: 53px; border-bottom: 1px solid #c6c6cd; display: flex; justify-content: space-between; align-items: center; padding: 0 29px 0 20px; }
.burger { width: 38px; height: 38px; border-radius: 50%; background: #006ce0; display: flex; align-items: center; justify-content: center; }
.tools { display: flex; gap: 27.5px; color: #424650; }

/* Side navigation */
.work { height: 727px; display: flex; overflow: hidden; }
.sidebar { width: 281px; padding: 21px 0 0 35px; color: #424650; overflow: hidden; }
.side-title { display: flex; align-items: center; height: 34px; width: 214px; justify-content: space-between; }
.side-title svg { margin-bottom: 2px; }
h2 { font-size: 22.5px; line-height: 34px; letter-spacing: -.65px; color: #0f141a; }
.ec2 { display: flex; align-items: center; gap: 6px; margin-top: 22px; letter-spacing: -.1px; }
.vpc-filter { width: 238px; height: 39px; margin-top: 11px; border: 1px solid #8c8c94; border-radius: 9px; display: flex; align-items: center; justify-content: space-between; padding: 0 18px 0 15px; color: #656871; letter-spacing: -.2px; }
.vpc-filter svg { color: #006ce0; }
h3 { font-size: 20px; line-height: 26px; margin: 20px 0 10px -22px; letter-spacing: -.65px; display: flex; align-items: center; gap: 10px; color: #0f141a; }
.sidebar li { margin-bottom: 10px; letter-spacing: -.23px; }
.sidebar li.on { color: #006ce0; font-weight: 700; letter-spacing: -.6px; }

/* Subnet list */
main { width: 1581px; }
.list { height: 313px; padding: 5px 20px 0; overflow: hidden; }
.flash { height: 45px; border-radius: 15px; background: #00802f; color: #fff; display: flex; align-items: center; padding: 0 23px 1px 20px; box-shadow: 0 4px 16px rgba(0, 7, 22, .16); letter-spacing: -.28px; }
.flash span { margin-left: 10px; flex: 1; }
.flash .x { color: #e6f3ea; }
.list-head { height: 34px; margin: 10px 5px 0; display: flex; align-items: center; }
h1 { font-size: 22.5px; line-height: 34px; letter-spacing: .2px; }
h1 span { font-weight: 400; color: #656871; letter-spacing: 1.4px; }
.list-head a { margin: 6px auto 0 10px; font-size: 15px; font-weight: 600; color: #006ce0; }
.list-head p { font-size: 15px; line-height: 20px; text-align: right; color: #656871; margin: 4px 10px 0 0; letter-spacing: -.15px; }
.btn { height: 34px; border: 2px solid #006ce0; border-radius: 17px; background: #fff; color: #006ce0; font-weight: 700; letter-spacing: -.6px; display: flex; align-items: center; justify-content: center; }
.refresh { width: 34px; }
.actions { width: 131px; margin: 0 10px; gap: 14px; }
.create { width: 159px; background: #f90; border-color: #f90; color: #0f141a; }
.find { width: 810px; height: 35px; margin: 11px 0 0 5px; border: 2px solid #8c8c94; border-radius: 9px; display: flex; align-items: center; padding-left: 14px; gap: 12px; color: #656871; letter-spacing: .06px; }
.filters { height: 34px; margin: 10px 5px 0; display: flex; }
.token { width: 391px; border: 2px solid #006ce0; border-radius: 9px; background: #f0fbff; display: flex; align-items: center; color: #0f141a; letter-spacing: 0; }
.token span { width: 352px; padding-left: 15px; height: 30px; border-right: 2px solid #006ce0; }
.token u { display: inline-block; height: 27px; line-height: 28px; text-decoration: none; border-bottom: 1.5px dashed #0f141a; }
.token svg { margin-left: 9px; color: #424650; }
.f-bar { width: 1px; background: #c6c6cd; margin: 0 25px; }
.clear { width: 141px; }
.pager { height: 34px; margin: 10px 7px 0 auto; display: flex; align-items: center; color: #a4a4ad; }
.pager b { width: 60px; text-align: center; color: #0f141a; }
.pager span { width: 1px; height: 34px; background: #c6c6cd; margin: 0 18px 0 17px; }
.pager .gear { color: #424650; }
.flip { transform: scaleX(-1); }
.table { margin: 16px 5px 0; overflow: hidden; }
.tr { display: grid; grid-template-columns: 49px 375px 313px 187px 313px 187px 400px; align-items: center; width: 1824px; white-space: nowrap; }
.tr > span { padding-left: 21px; display: flex; align-items: center; }
.tr > .sel { padding-left: 16px; }
.th { height: 41px; padding-top: 3px; border-bottom: 1px solid #c6c6cd; color: #424650; font-weight: 700; letter-spacing: -.5px; }
.th > span { height: 23px; border-right: 2px solid #8c8c94; justify-content: space-between; padding-right: 17px; margin-right: -1px; }
.th > .blk { letter-spacing: -.4px; }
.th > .last { letter-spacing: -.35px; justify-content: flex-start; }
.th > .sel { border-color: #c6c6cd; }
.td { height: 40px; border: 2px solid #006ce0; border-radius: 12px; background: #f0fbff; padding-bottom: 2px; letter-spacing: -.02px; }
.td > .sel { margin-left: -2px; }
.td > span:not(.sel) { position: relative; left: -2px; }
.td a { color: #006ce0; text-decoration: underline; text-underline-offset: 3px; text-decoration-thickness: 1px; letter-spacing: .03px; }
.td a.low { text-underline-offset: 6px; letter-spacing: -.13px; }
.td > .cut { letter-spacing: 1.2px; }
.td .ok, .td .off { gap: 4px; letter-spacing: 0; }
.td > .ok { letter-spacing: -.02px; }
.ok { color: #00802f; }
.off { color: #656871; }
.hscroll { height: 19px; margin: 0 5px; background: #fcfcfc; color: #8b8b8b; display: flex; align-items: center; padding: 0 5px; }
.hscroll span { width: 463px; height: 11px; border-radius: 6px; background: #8b8b8b; margin: 0 auto 0 6px; }
.hscroll .l { transform: rotate(-90deg); }
.hscroll .r { transform: rotate(90deg); }

/* Split panel */
.split { height: 414px; border-top: 1px solid #8c8c94; }
.split-bar { height: 39px; display: flex; align-items: center; gap: 26px; color: #424650; padding: 3px 29px 0 20px; }
.handle { flex: 1; height: 21px; display: flex; justify-content: center; margin-right: 1px; align-items: flex-start; padding-top: 6px; }
.handle span { width: 22px; height: 6px; border: solid #656871; border-width: 1.5px 0; }
.split-body { display: flex; height: 374px; overflow: hidden; }
.split-content { width: 1562px; padding: 0 20px; }
.split-content > h2 { font-size: 24px; letter-spacing: .02px; }
.tabs { height: 46px; border-bottom: 1px solid #c6c6cd; display: flex; font-size: 20px; font-weight: 700; letter-spacing: -.71px; color: #424650; }
.tabs span { height: 45px; line-height: 43px; padding-left: 26px; white-space: nowrap; background: linear-gradient(#c6c6cd, #c6c6cd) right 10px/1px 24px no-repeat; }
.tabs .on { color: #006ce0; background: linear-gradient(#c6c6cd, #c6c6cd) right 10px/1px 24px no-repeat, linear-gradient(#006ce0, #006ce0) 2px 41px/114px 4px no-repeat; }
.t1 { width: 117px; } .t2 { width: 140px; } .t3 { width: 160px; } .t4 { width: 174px; } .t5 { width: 219px; } .t6 { width: 124px; }
.tabs .t7 { background: none; }
.card { margin-top: 15px; height: 700px; border: 1px solid #c6c6cd; border-radius: 20px; padding: 16px 25px; }
.cols { display: grid; grid-template-columns: 358px 377px 378px 1fr; margin-top: 8px; }
.cols > div + div { border-left: 1px solid #c6c6cd; padding-left: 19px; }
.cols > div { height: 500px; }
dl { margin-bottom: 20px; }
dl:first-child { margin-top: -1px; }
dt { font-weight: 700; letter-spacing: -.47px; }
dd { height: auto; letter-spacing: -.03px; }
dd.ok, dd.off { display: flex; align-items: center; gap: 4px; letter-spacing: -.02px; }
dd .cp { display: inline-block; color: #006ce0; margin: 0 15px 0 5px; vertical-align: -4px; }
dd a { color: #006ce0; letter-spacing: -.1px; }

footer { height: 38px; background: #161d26; border-top: 1px solid #424650; display: flex; align-items: center; padding-left: 20px; color: #ebebf0; font-size: 15px; font-weight: 500; letter-spacing: -.37px; white-space: nowrap; }
.f1 { margin-left: 6px; width: 105px; }
.copy { margin-left: auto; width: 381px; font-weight: 400; letter-spacing: -.13px; color: #c6c6cd; }
.f3 { width: 79px; } .f4 { width: 73px; } .f5 { width: 149px; }

/* Windows taskbar */
.taskbar { height: 60px; border-top: 1px solid #b9bcbb; display: flex; align-items: center; background: linear-gradient(90deg, #dbdfe8, #d3e0e9 110px, #d6e0e6 170px, #eadfd5 290px, #dde1e0 430px, #dfe1df 560px, #f0e8c8 700px, #dfdedd 800px, #d6dcea 930px, #dee0e0 1050px, #dfe0dd 1240px, #efdfd4 1290px, #f4e4d6 1530px, #dde4df 1620px, #eee5bd 1690px, #dce8d8 1780px, #e0e7dc); color: #1b1b1b; }
.weather { position: relative; width: 229px; padding: 8px 0 0 26px; }
.badge { position: absolute; left: 40px; top: -5px; width: 20px; height: 20px; border-radius: 10px; background: #c42b1c; color: #fff; font-size: 13px; line-height: 20px; text-align: center; }
.apps-row { display: flex; height: 59px; }
.apps-row > span { position: relative; width: 54px; display: flex; align-items: center; justify-content: center; padding-bottom: 1px; }
.apps-row > .w50 { width: 50px; } .apps-row > .w51 { width: 51px; } .apps-row > .w53 { width: 53px; } .apps-row > .w55 { width: 54.9px; }
.run::after { content: ""; position: absolute; bottom: 6px; width: 8px; height: 4px; border-radius: 2px; background: #868686; }
.active::before { content: ""; position: absolute; left: 4px; right: 4px; top: 5px; bottom: 6px; border-radius: 5px; background: #f1f1f2; border: 1px solid #dcdcdf; }
.active svg { position: relative; }
.active::after { content: ""; position: absolute; bottom: 6px; width: 20px; height: 4px; border-radius: 2px; background: #0a75d1; }
.sq { width: 30px; height: 30px; color: #fff; text-align: center; }
.in { border-radius: 4px; background: #0a74b3; font: 700 26px/29px "Open Sans", sans-serif; }
.edge { background: #1d3f7c; font: 500 13px/13px "Open Sans", sans-serif; font-stretch: 75%; letter-spacing: -1.1px; padding-top: 2px; }
.tray { margin-left: auto; padding-right: 14px; display: flex; align-items: center; font-size: 15px; line-height: 20px; letter-spacing: -.13px; height: 57px; margin-bottom: 2px; }
.tray span { display: flex; justify-content: center; }
.c-chev { width: 40px; } .c-send { width: 38px; } .c-wifi { width: 34px; } .c-spk { width: 28px; } .c-bat { width: 32px; } .c-bell { width: 40px; }
.tray .c-lang { width: 60px; display: block; text-align: center; letter-spacing: -.4px; }
.tray .c-time { width: 91px; display: block; text-align: right; }
```
